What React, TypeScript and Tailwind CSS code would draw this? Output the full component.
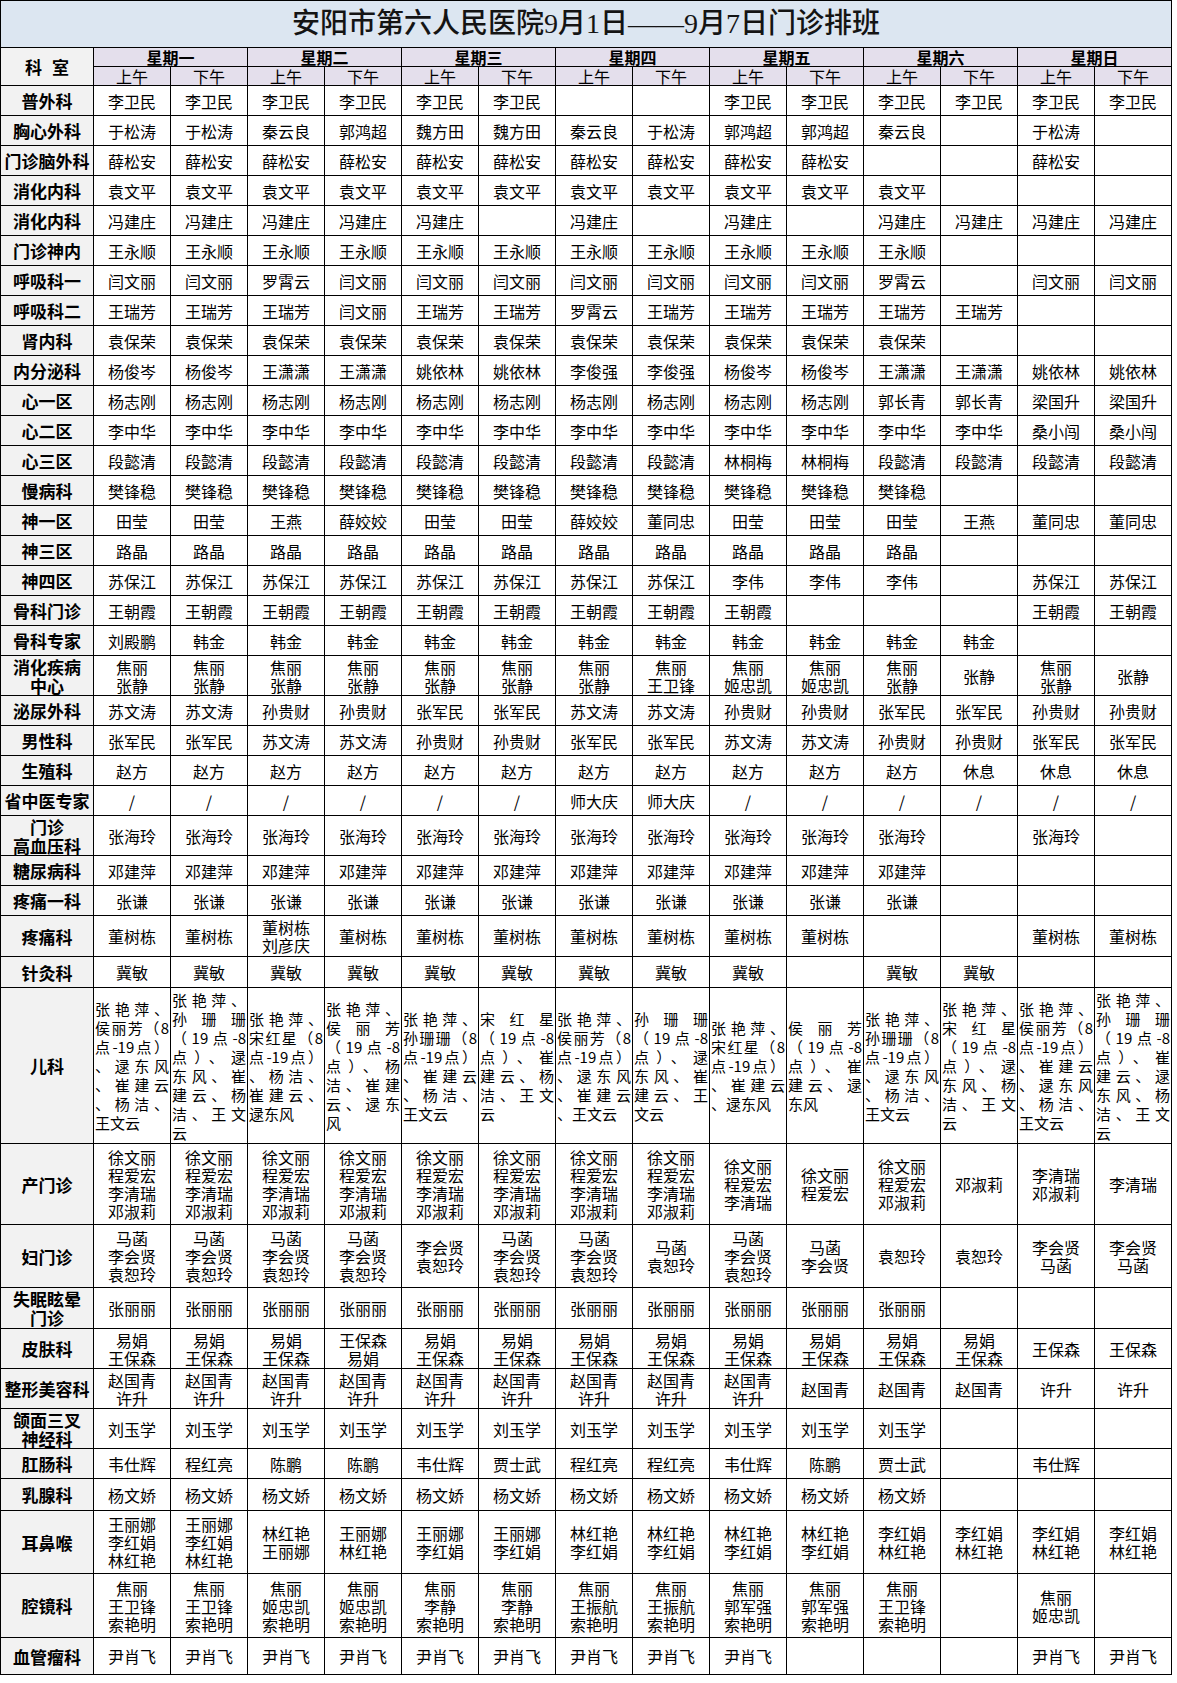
import React from "react";

type Cell = string | string[] | { kids: string[] };

interface Row {
  dept: string[];
  h: string;
  cells: Cell[];
}

const rep = (v: Cell, n: number): Cell[] => Array.from({ length: n }, () => v);

const days = ["星期一", "星期二", "星期三", "星期四", "星期五", "星期六", "星期日"];

const rows: Row[] = [
  { dept: ["普外科"], h: "h-[30px]", cells: [...rep("李卫民", 6), "", "", ...rep("李卫民", 6)] },
  {
    dept: ["胸心外科"],
    h: "h-[30px]",
    cells: ["于松涛", "于松涛", "秦云良", "郭鸿超", "魏方田", "魏方田", "秦云良", "于松涛", "郭鸿超", "郭鸿超", "秦云良", "", "于松涛", ""],
  },
  { dept: ["门诊脑外科"], h: "h-[30px]", cells: [...rep("薛松安", 10), "", "", "薛松安", ""] },
  { dept: ["消化内科"], h: "h-[30px]", cells: [...rep("袁文平", 11), "", "", ""] },
  {
    dept: ["消化内科"],
    h: "h-[30px]",
    cells: ["冯建庄", "冯建庄", "冯建庄", "冯建庄", "冯建庄", "", "冯建庄", "", "冯建庄", "", "冯建庄", "冯建庄", "冯建庄", "冯建庄"],
  },
  { dept: ["门诊神内"], h: "h-[30px]", cells: [...rep("王永顺", 11), "", "", ""] },
  {
    dept: ["呼吸科一"],
    h: "h-[30px]",
    cells: ["闫文丽", "闫文丽", "罗霄云", "闫文丽", "闫文丽", "闫文丽", "闫文丽", "闫文丽", "闫文丽", "闫文丽", "罗霄云", "", "闫文丽", "闫文丽"],
  },
  {
    dept: ["呼吸科二"],
    h: "h-[30px]",
    cells: ["王瑞芳", "王瑞芳", "王瑞芳", "闫文丽", "王瑞芳", "王瑞芳", "罗霄云", "王瑞芳", "王瑞芳", "王瑞芳", "王瑞芳", "王瑞芳", "", ""],
  },
  { dept: ["肾内科"], h: "h-[30px]", cells: [...rep("袁保荣", 11), "", "", ""] },
  {
    dept: ["内分泌科"],
    h: "h-[30px]",
    cells: ["杨俊岑", "杨俊岑", "王潇潇", "王潇潇", "姚依林", "姚依林", "李俊强", "李俊强", "杨俊岑", "杨俊岑", "王潇潇", "王潇潇", "姚依林", "姚依林"],
  },
  { dept: ["心一区"], h: "h-[30px]", cells: [...rep("杨志刚", 10), "郭长青", "郭长青", "梁国升", "梁国升"] },
  { dept: ["心二区"], h: "h-[30px]", cells: [...rep("李中华", 12), "桑小闯", "桑小闯"] },
  { dept: ["心三区"], h: "h-[30px]", cells: [...rep("段懿清", 8), "林桐梅", "林桐梅", ...rep("段懿清", 4)] },
  { dept: ["慢病科"], h: "h-[30px]", cells: [...rep("樊锋稳", 11), "", "", ""] },
  {
    dept: ["神一区"],
    h: "h-[30px]",
    cells: ["田莹", "田莹", "王燕", "薛姣姣", "田莹", "田莹", "薛姣姣", "董同忠", "田莹", "田莹", "田莹", "王燕", "董同忠", "董同忠"],
  },
  { dept: ["神三区"], h: "h-[30px]", cells: [...rep("路晶", 11), "", "", ""] },
  { dept: ["神四区"], h: "h-[30px]", cells: [...rep("苏保江", 8), "李伟", "李伟", "李伟", "", "苏保江", "苏保江"] },
  { dept: ["骨科门诊"], h: "h-[30px]", cells: [...rep("王朝霞", 9), "", "", "", "王朝霞", "王朝霞"] },
  { dept: ["骨科专家"], h: "h-[30px]", cells: ["刘殿鹏", ...rep("韩金", 11), "", ""] },
  {
    dept: ["消化疾病", "中心"],
    h: "h-[40px]",
    cells: [
      ...rep(["焦丽", "张静"], 7),
      ["焦丽", "王卫锋"],
      ["焦丽", "姬忠凯"],
      ["焦丽", "姬忠凯"],
      ["焦丽", "张静"],
      "张静",
      ["焦丽", "张静"],
      "张静",
    ],
  },
  {
    dept: ["泌尿外科"],
    h: "h-[30px]",
    cells: ["苏文涛", "苏文涛", "孙贵财", "孙贵财", "张军民", "张军民", "苏文涛", "苏文涛", "孙贵财", "孙贵财", "张军民", "张军民", "孙贵财", "孙贵财"],
  },
  {
    dept: ["男性科"],
    h: "h-[30px]",
    cells: ["张军民", "张军民", "苏文涛", "苏文涛", "孙贵财", "孙贵财", "张军民", "张军民", "苏文涛", "苏文涛", "孙贵财", "孙贵财", "张军民", "张军民"],
  },
  { dept: ["生殖科"], h: "h-[30px]", cells: [...rep("赵方", 11), "休息", "休息", "休息"] },
  { dept: ["省中医专家"], h: "h-[30px]", cells: [...rep("/", 6), "师大庆", "师大庆", ...rep("/", 6)] },
  { dept: ["门诊", "高血压科"], h: "h-[40px]", cells: [...rep("张海玲", 11), "", "张海玲", ""] },
  { dept: ["糖尿病科"], h: "h-[30px]", cells: [...rep("邓建萍", 11), "", "", ""] },
  { dept: ["疼痛一科"], h: "h-[30px]", cells: [...rep("张谦", 11), "", "", ""] },
  {
    dept: ["疼痛科"],
    h: "h-[41px]",
    cells: ["董树栋", "董树栋", ["董树栋", "刘彦庆"], ...rep("董树栋", 7), "", "", "董树栋", "董树栋"],
  },
  { dept: ["针灸科"], h: "h-[31px]", cells: [...rep("冀敏", 9), "", "冀敏", "冀敏", "", ""] },
  {
    dept: ["儿科"],
    h: "h-[156px]",
    cells: [
      { kids: ["张艳萍、", "侯丽芳（8", "点-19点）", "、逯东风", "、崔建云", "、杨洁、", "王文云"] },
      { kids: ["张艳萍、", "孙珊珊", "（19点-8", "点）、逯", "东风、崔", "建云、杨", "洁、王文", "云"] },
      { kids: ["张艳萍、", "宋红星（8", "点-19点）", "、杨洁、", "崔建云、", "逯东风"] },
      { kids: ["张艳萍、", "侯丽芳", "（19点-8", "点）、杨", "洁、崔建", "云、逯东", "风"] },
      { kids: ["张艳萍、", "孙珊珊（8", "点-19点）", "、崔建云", "、杨洁、", "王文云"] },
      { kids: ["宋红星", "（19点-8", "点）、崔", "建云、杨", "洁、王文", "云"] },
      { kids: ["张艳萍、", "侯丽芳（8", "点-19点）", "、逯东风", "、崔建云", "、王文云"] },
      { kids: ["孙珊珊", "（19点-8", "点）、逯", "东风、崔", "建云、王", "文云"] },
      { kids: ["张艳萍、", "宋红星（8", "点-19点）", "、崔建云", "、逯东风"] },
      { kids: ["侯丽芳", "（19点-8", "点）、崔", "建云、逯", "东风"] },
      { kids: ["张艳萍、", "孙珊珊（8", "点-19点）", "、逯东风", "、杨洁、", "王文云"] },
      { kids: ["张艳萍、", "宋红星", "（19点-8", "点）、逯", "东风、杨", "洁、王文", "云"] },
      { kids: ["张艳萍、", "侯丽芳（8", "点-19点）", "、崔建云", "、逯东风", "、杨洁、", "王文云"] },
      { kids: ["张艳萍、", "孙珊珊", "（19点-8", "点）、崔", "建云、逯", "东风、杨", "洁、王文", "云"] },
    ],
  },
  {
    dept: ["产门诊"],
    h: "h-[81px]",
    cells: [
      ...rep(["徐文丽", "程爱宏", "李清瑞", "邓淑莉"], 8),
      ["徐文丽", "程爱宏", "李清瑞"],
      ["徐文丽", "程爱宏"],
      ["徐文丽", "程爱宏", "邓淑莉"],
      "邓淑莉",
      ["李清瑞", "邓淑莉"],
      "李清瑞",
    ],
  },
  {
    dept: ["妇门诊"],
    h: "h-[63px]",
    cells: [
      ...rep(["马菡", "李会贤", "袁恕玲"], 4),
      ["李会贤", "袁恕玲"],
      ["马菡", "李会贤", "袁恕玲"],
      ["马菡", "李会贤", "袁恕玲"],
      ["马菡", "袁恕玲"],
      ["马菡", "李会贤", "袁恕玲"],
      ["马菡", "李会贤"],
      "袁恕玲",
      "袁恕玲",
      ["李会贤", "马菡"],
      ["李会贤", "马菡"],
    ],
  },
  { dept: ["失眠眩晕", "门诊"], h: "h-[41px]", cells: [...rep("张丽丽", 11), "", "", ""] },
  {
    dept: ["皮肤科"],
    h: "h-[40px]",
    cells: [...rep(["易娟", "王保森"], 3), ["王保森", "易娟"], ...rep(["易娟", "王保森"], 8), "王保森", "王保森"],
  },
  {
    dept: ["整形美容科"],
    h: "h-[40px]",
    cells: [...rep(["赵国青", "许升"], 9), "赵国青", "赵国青", "赵国青", "许升", "许升"],
  },
  { dept: ["颌面三叉", "神经科"], h: "h-[40px]", cells: [...rep("刘玉学", 11), "", "", ""] },
  {
    dept: ["肛肠科"],
    h: "h-[30px]",
    cells: ["韦仕辉", "程红亮", "陈鹏", "陈鹏", "韦仕辉", "贾士武", "程红亮", "程红亮", "韦仕辉", "陈鹏", "贾士武", "", "韦仕辉", ""],
  },
  { dept: ["乳腺科"], h: "h-[32px]", cells: [...rep("杨文娇", 11), "", "", ""] },
  {
    dept: ["耳鼻喉"],
    h: "h-[63px]",
    cells: [
      ["王丽娜", "李红娟", "林红艳"],
      ["王丽娜", "李红娟", "林红艳"],
      ["林红艳", "王丽娜"],
      ["王丽娜", "林红艳"],
      ["王丽娜", "李红娟"],
      ["王丽娜", "李红娟"],
      ...rep(["林红艳", "李红娟"], 4),
      ...rep(["李红娟", "林红艳"], 4),
    ],
  },
  {
    dept: ["腔镜科"],
    h: "h-[64px]",
    cells: [
      ...rep(["焦丽", "王卫锋", "索艳明"], 2),
      ...rep(["焦丽", "姬忠凯", "索艳明"], 2),
      ...rep(["焦丽", "李静", "索艳明"], 2),
      ...rep(["焦丽", "王振航", "索艳明"], 2),
      ...rep(["焦丽", "郭军强", "索艳明"], 2),
      ["焦丽", "王卫锋", "索艳明"],
      "",
      ["焦丽", "姬忠凯"],
      "",
    ],
  },
  { dept: ["血管瘤科"], h: "h-[37px]", cells: [...rep("尹肖飞", 9), "", "", "", "尹肖飞", "尹肖飞"] },
];

const font = "font-['Noto_Sans_CJK_SC','Liberation_Sans',sans-serif]";

function DataCell({ cell }: { cell: Cell }) {
  if (typeof cell === "object" && !Array.isArray(cell)) {
    // 儿科: distributed lines, the last one left aligned
    return (
      <td className="border border-black px-[1px] py-0 align-middle text-left text-[15px] leading-[19px]">
        {cell.kids.map((line, i) => (
          <div
            key={i}
            className={
              i === cell.kids.length - 1
                ? "whitespace-nowrap text-left"
                : "whitespace-nowrap text-justify [text-align-last:justify]"
            }
          >
            {line}
          </div>
        ))}
      </td>
    );
  }
  const lines = Array.isArray(cell) ? cell : [cell];
  return (
    <td className="border border-black p-0 align-middle text-center text-[16px] leading-[18px]">
      {lines.map((l, i) => (
        <div key={i}>{l}</div>
      ))}
    </td>
  );
}

export default function App() {
  return (
    <div className={`min-h-[1683px] w-[1177px] bg-white text-black ${font}`}>
      <table className="w-[1172px] table-fixed border-collapse">
        <colgroup>
          <col className="w-[93px]" />
          {Array.from({ length: 14 }, (_, i) => (
            <col key={i} className="w-[77px]" />
          ))}
        </colgroup>
        <tbody>
          <tr className="h-[47px]">
            <td
              colSpan={15}
              className="border border-black bg-[#dce6f1] p-0 text-center align-middle font-['Liberation_Serif','Noto_Sans_CJK_SC',serif] text-[28px] font-medium text-[#141414]"
            >
              安阳市第六人民医院9月1日——9月7日门诊排班
            </td>
          </tr>
          <tr className="h-[19px]">
            <td
              rowSpan={2}
              className="border border-black bg-[#f2f2f2] p-0 text-center align-middle text-[17px] font-bold leading-[19px]"
            >
              <span className="mr-[10px]">科</span>室
            </td>
            {days.map((d) => (
              <td
                key={d}
                colSpan={2}
                className="border border-black bg-[#e4dfec] p-0 text-center align-bottom text-[16px] font-bold leading-[17px]"
              >
                {d}
              </td>
            ))}
          </tr>
          <tr className="h-[19px]">
            {days.map((d) => (
              <React.Fragment key={d}>
                <td className="border border-black bg-[#e4dfec] p-0 text-center align-bottom text-[16px] leading-[17px]">
                  上午
                </td>
                <td className="border border-black bg-[#e4dfec] p-0 text-center align-bottom text-[16px] leading-[17px]">
                  下午
                </td>
              </React.Fragment>
            ))}
          </tr>
          {rows.map((row, ri) => (
            <tr key={ri} className={row.h}>
              <td className="border border-black bg-[#f2f2f2] p-0 text-center align-middle text-[17px] font-bold leading-[19px]">
                {row.dept.map((l, i) => (
                  <div key={i}>{l}</div>
                ))}
              </td>
              {row.cells.map((c, ci) => (
                <DataCell key={ci} cell={c} />
              ))}
            </tr>
          ))}
        </tbody>
      </table>
    </div>
  );
}
